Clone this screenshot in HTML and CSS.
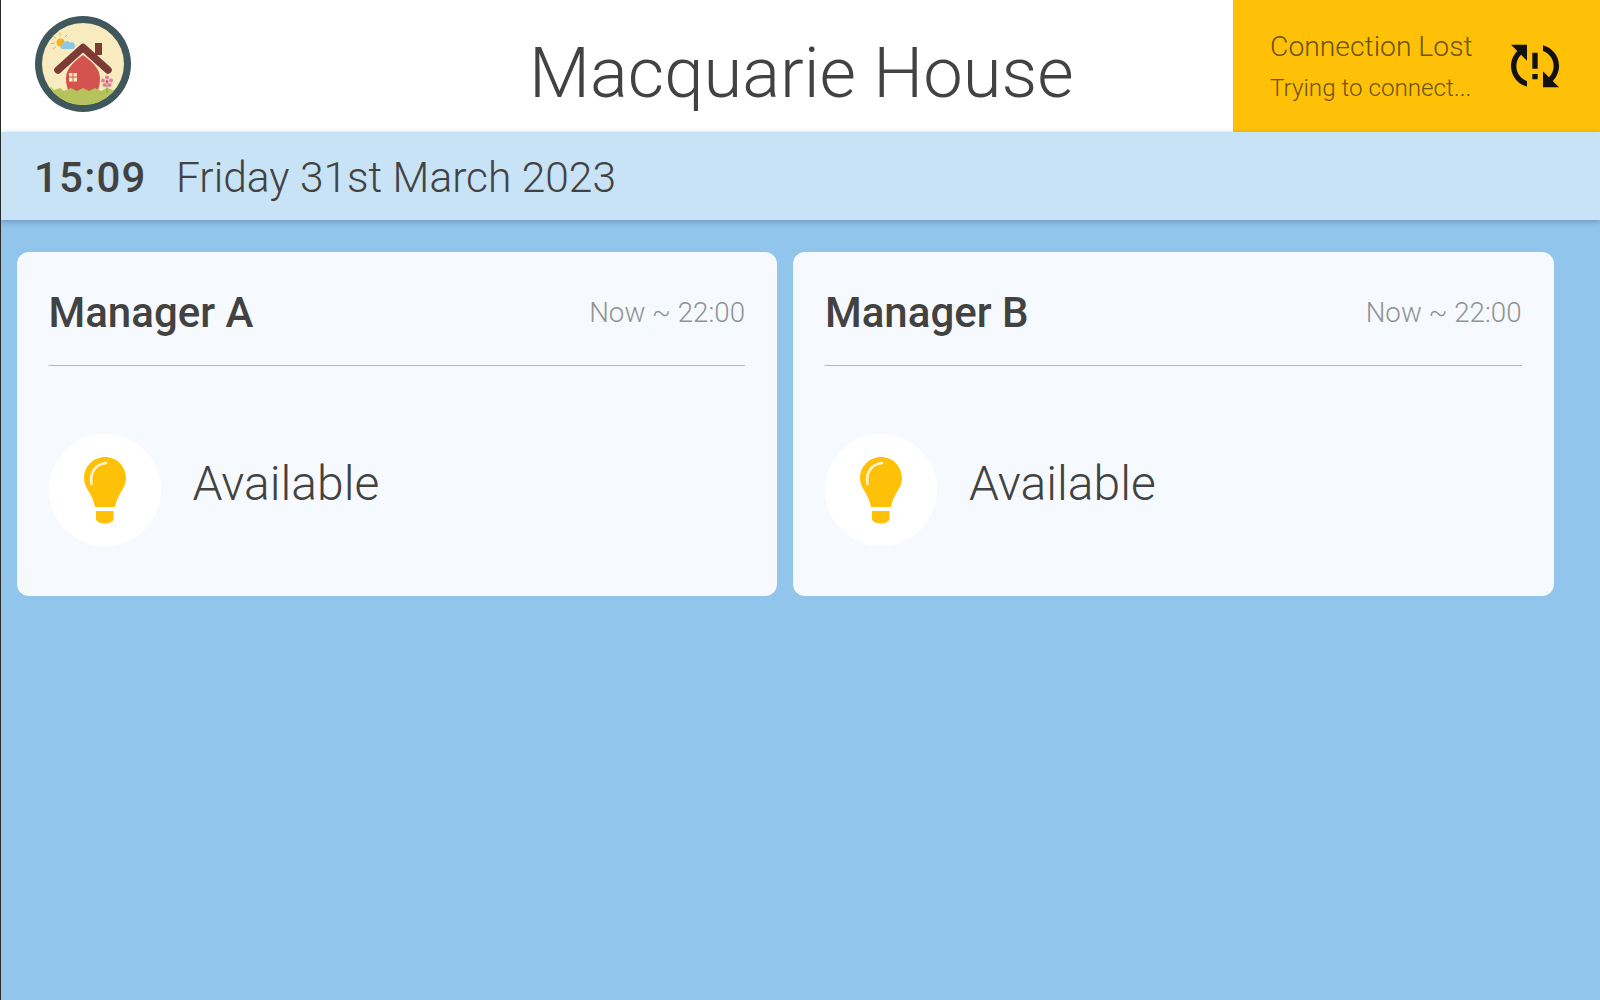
FILE: index.html
```html
<!DOCTYPE html>
<html lang="en">
<head>
<meta charset="utf-8">
<title>Macquarie House</title>
<link rel="stylesheet" href="styles.css">
</head>
<body>
<div class="app">
  <header class="header">
    <div class="logo-slot">
      <svg class="logo" viewBox="0 0 96 96" width="96" height="96" aria-hidden="true">
        <defs><clipPath id="inner"><circle cx="48" cy="48" r="41"/></clipPath></defs>
        <circle cx="48" cy="48" r="48" fill="#40575c"/>
        <circle cx="48" cy="48" r="41" fill="#f8ebc0"/>
        <rect x="60" y="27" width="7" height="12" fill="#7e3a35"/>
        <path d="M48 39 C56 45 65 52 65 62 C65 68 64 72 62 76 H34 C32 72 31 68 31 62 C31 52 40 45 48 39Z" fill="#d4534f"/>
        <g clip-path="url(#inner)">
          <path d="M0 77 L12 74 L16 71 L19 74 L25 72 L29 75 L36 72 L42 75 L48 72 L54 75 L60 72 L66 75 L72 72 L78 74 L96 74 V96 H0Z" fill="#b4c35a"/>
        </g>
        <g stroke="#f4b21e" stroke-width="1" stroke-linecap="round">
          <path d="M19.500 27 L16.500 27.500M20.500 22 L18 20M25 20 L25 17M30 21 L32 19M20.500 31 L18 33"/>
        </g>
        <circle cx="25.500" cy="26.500" r="4" fill="#f4b21e"/>
        <path d="M27 33 a3 3 0 0 1 1-5.500 a4.500 4.500 0 0 1 7-1 a3.300 3.300 0 0 1 3 6.500Z" fill="#8fc6e4"/>
        <path d="M23 54 L48 31.500 L73 54" fill="none" stroke="#7e3a35" stroke-width="7.500" stroke-linecap="round" stroke-linejoin="round"/>
        <path d="M34 57 h8 v8.500 h-8Z" fill="#f8ebc0"/>
        <path d="M38 57 v8.500 M34 61 h8" stroke="#d4534f" stroke-width="1"/>
        <path d="M72 67 V77" stroke="#7fa84a" stroke-width="1.200"/>
        <g fill="#e77a9c">
          <circle cx="72" cy="61.500" r="2"/><circle cx="76" cy="64.500" r="2"/><circle cx="74.500" cy="69" r="2"/><circle cx="69.500" cy="69" r="2"/><circle cx="68" cy="64.500" r="2"/>
        </g>
        <circle cx="72" cy="65.500" r="1.500" fill="#c9506f"/>
      </svg>
    </div>
    <h1 class="title">Macquarie House</h1>
    <div class="status">
      <div class="status-text">
        <div class="status-main">Connection Lost</div>
        <div class="status-sub">Trying to connect...</div>
      </div>
      <svg class="sync" viewBox="0 0 24 24" width="64" height="64" aria-hidden="true">
        <path d="M3 12c0 2.210.91 4.200 2.360 5.640L3 20h6v-6l-2.240 2.240C5.680 15.150 5 13.660 5 12c0-2.610 1.670-4.830 4-5.650V4.260C5.550 5.150 3 8.270 3 12zm8 5h2v-2h-2v2zM21 4h-6v6l2.240-2.240C18.320 8.850 19 10.340 19 12c0 2.610-1.670 4.830-4 5.650v2.090c3.450-.89 6-4.010 6-7.740 0-2.210-.91-4.200-2.360-5.640L21 4zm-10 9h2V7h-2v6z" fill="#111"/>
      </svg>
    </div>
  </header>
  <div class="datebar">
    <span class="time">15:09</span>
    <span class="date">Friday 31st March 2023</span>
  </div>
  <main class="cards">
    <section class="card">
      <div class="card-head">
        <span class="name">Manager A</span>
        <span class="hours">Now ~ 22:00</span>
      </div>
      <div class="card-body">
        <div class="bulb-circle">
          <svg class="bulb" viewBox="0 0 42 67" width="42" height="67" aria-hidden="true">
            <path d="M21 0 C32.600 0 42 9.400 42 21 C42 26 40.200 30 37.500 34 C34.500 39 32 44 31 50 H11 C10 44 7.500 39 4.500 34 C1.800 30 0 26 0 21 C0 9.400 9.400 0 21 0Z" fill="#ffc107"/>
            <path d="M12 54 H29.500 V63 L26 65.800 Q21 67.200 15.500 65.800 L12 63Z" fill="#ffc107"/>
            <path d="M7.500 27 C5.500 15 12 7 22 6" fill="none" stroke="#fff3cf" stroke-width="2.600" stroke-linecap="round"/>
          </svg>
        </div>
        <span class="state">Available</span>
      </div>
    </section>
    <section class="card">
      <div class="card-head">
        <span class="name">Manager B</span>
        <span class="hours">Now ~ 22:00</span>
      </div>
      <div class="card-body">
        <div class="bulb-circle">
          <svg class="bulb" viewBox="0 0 42 67" width="42" height="67" aria-hidden="true">
            <path d="M21 0 C32.600 0 42 9.400 42 21 C42 26 40.200 30 37.500 34 C34.500 39 32 44 31 50 H11 C10 44 7.500 39 4.500 34 C1.800 30 0 26 0 21 C0 9.400 9.400 0 21 0Z" fill="#ffc107"/>
            <path d="M12 54 H29.500 V63 L26 65.800 Q21 67.200 15.500 65.800 L12 63Z" fill="#ffc107"/>
            <path d="M7.500 27 C5.500 15 12 7 22 6" fill="none" stroke="#fff3cf" stroke-width="2.600" stroke-linecap="round"/>
          </svg>
        </div>
        <span class="state">Available</span>
      </div>
    </section>
  </main>
</div>
</body>
</html>
```
FILE: styles.css
```css
* { box-sizing: border-box; }
html, body { margin: 0; height: 100%; }
body {
  font-family: Roboto, "Liberation Sans", sans-serif;
  color: #424242;
  background: #92c5ec;
  overflow: hidden;
}
.app {
  height: 1000px;
  border-left: 1px solid #2a2a2a;
  display: flex;
  flex-direction: column;
}
.header {
  height: 132px;
  background: #fff;
  display: flex;
  align-items: stretch;
}
.logo-slot {
  width: 528px;
  padding: 16px 0 0 34px;
}
.logo { display: block; }
.title {
  width: 704px;
  margin: 0;
  font-size: 70.500px;
  font-weight: 300;
  line-height: 146px;
  white-space: nowrap;
}
.status {
  flex: 1;
  background: #ffc107;
  display: flex;
  align-items: center;
  justify-content: space-between;
  padding: 0 33px 0 37px;
  color: #6b5413;
  font-weight: 300;
}
.status-text { padding-top: 3px; }
.status-main { font-size: 28.300px; line-height: 40px; margin-bottom: 1px; }
.status-sub { font-size: 24.200px; line-height: 40px; }
.sync { display: block; transform: scaleX(-1); }
.datebar {
  height: 88px;
  background: #c8e3f6;
  box-shadow: 0 2px 6px rgba(40, 70, 100, 0.35);
  display: flex;
  align-items: center;
  padding: 2px 0 0 33px;
  position: relative;
}
.time {
  font-size: 42px;
  font-weight: 500;
  letter-spacing: 1.200px;
  width: 142px;
}
.date { font-size: 42.500px; font-weight: 300; }
.cards {
  padding: 32px 46.500px 0 15.500px;
  display: grid;
  grid-template-columns: 1fr 1fr;
  gap: 16px;
  align-items: start;
}
.card {
  height: 344px;
  background: #f6fafe;
  border-radius: 12px;
  padding: 0 32px;
}
.card-head {
  height: 114px;
  border-bottom: 1px solid #b4b6b8;
  display: flex;
  justify-content: space-between;
  align-items: center;
  padding-top: 8px;
}
.name { font-size: 42px; font-weight: 500; }
.hours { font-size: 27.700px; font-weight: 300; color: #909396; }
.card-body {
  display: flex;
  align-items: flex-start;
  gap: 32px;
  padding-top: 68px;
}
.bulb-circle {
  width: 112px;
  height: 112px;
  border-radius: 50%;
  background: #fff;
  display: flex;
  align-items: center;
  justify-content: center;
}
.bulb { display: block; }
.state { font-size: 48px; font-weight: 300; line-height: 100px; }
```
